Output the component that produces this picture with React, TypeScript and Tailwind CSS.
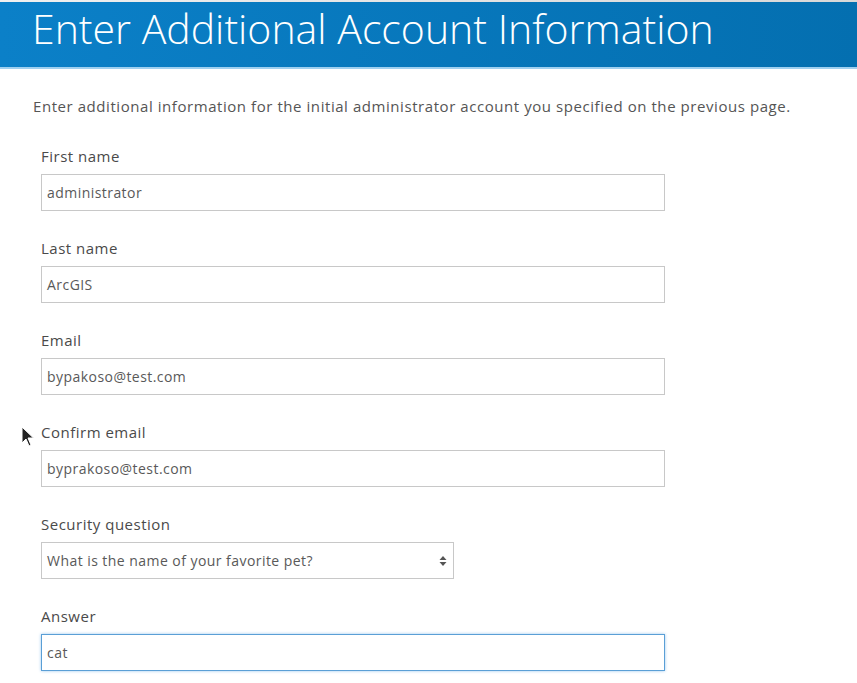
import React from "react";

const font = { fontFamily: "'Open Sans', Lato, sans-serif" };

function Field({ label, value, focused = false }: { label: string; value: string; focused?: boolean }) {
  return (
    <div className="flex flex-col">
      <label className="h-[20px] text-[15px] leading-[20px] tracking-[0.5px] text-[#4a4a4a]">{label}</label>
      <div
        className={
          focused
            ? "mt-[8px] flex h-[37px] w-[624px] items-center border border-[#5a9fd6] px-[5px] text-[14px] tracking-[0.45px] text-[#595959] shadow-[0_0_3px_#9cc8ee]"
            : "mt-[8px] flex h-[37px] w-[624px] items-center border border-[#c8c8c8] px-[5px] text-[14px] tracking-[0.45px] text-[#595959]"
        }
      >
        {value}
      </div>
    </div>
  );
}

export default function App() {
  return (
    <div className="relative h-[683px] w-[857px] overflow-hidden bg-white" style={font}>
      <div className="h-[2px] bg-gradient-to-r from-[#f0f0f0] to-[#d8d8d8]" />
      <div className="flex h-[67px] items-center bg-gradient-to-r from-[#0b80c8] to-[#046fb0] pl-[32px] border-b-[2px] border-[#9fd0f0]">
        <h1 className="text-[41px] font-light leading-none text-white -mt-[12px]">Enter Additional Account Information</h1>
      </div>
      <p className="mt-[27px] pl-[33px] text-[15px] leading-[20px] tracking-[0.56px] text-[#555]">
        Enter additional information for the initial administrator account you specified on the previous page.
      </p>
      <div className="mt-[30px] flex flex-col gap-[27px] pl-[41px]">
        <Field label="First name" value="administrator" />
        <Field label="Last name" value="ArcGIS" />
        <Field label="Email" value="bypakoso@test.com" />
        <Field label="Confirm email" value="byprakoso@test.com" />
        <div className="flex flex-col">
          <label className="h-[20px] text-[15px] leading-[20px] tracking-[0.5px] text-[#4a4a4a]">Security question</label>
          <div className="mt-[8px] flex h-[37px] w-[413px] items-center justify-between border border-[#c8c8c8] pl-[5px] pr-[6px] text-[14px] tracking-[0.45px] text-[#595959]">
            <span>What is the name of your favorite pet?</span>
            <svg width="8" height="12" viewBox="0 0 8 12">
              <path d="M4 1 L7.5 5 L0.5 5 Z" fill="#555" />
              <path d="M4 11 L7.5 7 L0.5 7 Z" fill="#555" />
            </svg>
          </div>
        </div>
        <Field label="Answer" value="cat" focused />
      </div>
      <svg className="absolute left-[21px] top-[426px]" width="14" height="22" viewBox="0 0 14 22">
        <path d="M1 1 L1 17 L5 13 L8 20 L10 19 L7 12 L12.5 12 Z" fill="#222" stroke="#fff" strokeWidth="1" />
      </svg>
    </div>
  );
}
